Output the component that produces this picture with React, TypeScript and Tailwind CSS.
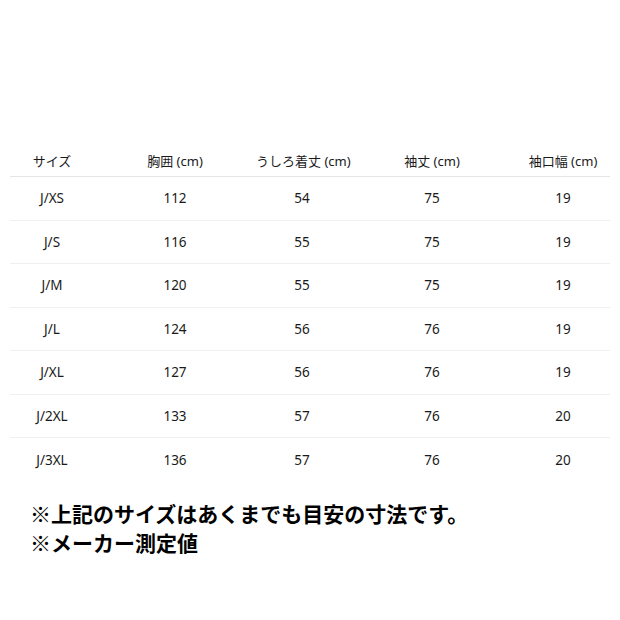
import React from 'react';

const headers = ['サイズ', '胸囲 (cm)', 'うしろ着丈 (cm)', '袖丈 (cm)', '袖口幅 (cm)'];

const rows: string[][] = [
  ['J/XS', '112', '54', '75', '19'],
  ['J/S', '116', '55', '75', '19'],
  ['J/M', '120', '55', '75', '19'],
  ['J/L', '124', '56', '76', '19'],
  ['J/XL', '127', '56', '76', '19'],
  ['J/2XL', '133', '57', '76', '20'],
  ['J/3XL', '136', '57', '76', '20'],
];

const cols = 'grid grid-cols-[84px_162px_92px_168px_94px]';

export default function App() {
  return (
    <div className="w-[620px] h-[620px] bg-white text-[#1a1a1a] font-['Noto_Sans','Noto_Sans_CJK_JP',sans-serif]">
      <div className="pt-[147px] px-[10px]">
        <div className={`${cols} h-[30px] items-center border-b border-[#e6e6e6] text-[13px]`}>
          {headers.map((h) => (
            <div key={h} className="text-center whitespace-nowrap">{h}</div>
          ))}
        </div>
        {rows.map((r, i) => (
          <div
            key={r[0]}
            className={`${cols} h-[43.5px] items-center text-[13.5px] ${i < rows.length - 1 ? 'border-b border-[#f0f0f0]' : ''}`}
          >
            {r.map((c, j) => (
              <div key={j} className="text-center">{c}</div>
            ))}
          </div>
        ))}
      </div>
      <div className="mt-[17px] pl-[30px] text-[21px] leading-[29px] font-bold text-black font-['Noto_Sans_CJK_JP',sans-serif]">
        <p>※上記のサイズはあくまでも目安の寸法です。</p>
        <p>※メーカー測定値</p>
      </div>
    </div>
  );
}
